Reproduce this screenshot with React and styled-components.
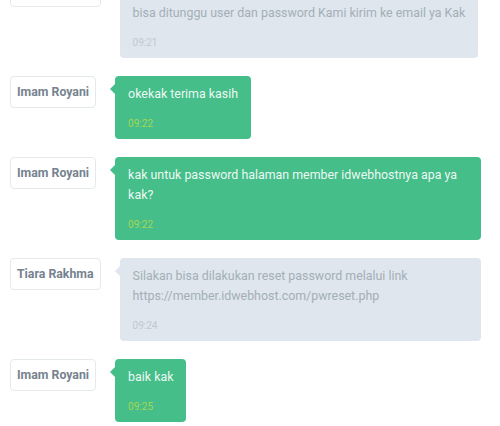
import React from "react";
import styled, { createGlobalStyle } from "styled-components";

const Global = createGlobalStyle`
  html, body { margin: 0; padding: 0; background: #ffffff; }
  body { font-family: Roboto, "Noto Sans", "Liberation Sans", sans-serif; overflow: hidden; }
`;

const Chat = styled.div`
  width: 500px;
  height: 426px;
  overflow: hidden;
  box-sizing: border-box;
`;

const List = styled.div`
  display: flex;
  flex-direction: column;
  gap: 18px;
  padding: 0 19px 0 10px;
  margin-top: -25px;
`;

const Row = styled.div`
  display: flex;
  align-items: flex-start;
`;

const NameTag = styled.div`
  flex: none;
  box-sizing: border-box;
  display: flex;
  align-items: center;
  height: 32px;
  padding: 0 6px;
  border: 1px solid #e4eaec;
  border-radius: 4px;
  font-size: 12.3px;
  font-weight: 700;
  line-height: 20px;
  color: #76838f;
  white-space: nowrap;
`;

const Bubble = styled.div`
  position: relative;
  flex: 0 1 auto;
  min-width: 0;
  margin-left: 19px;
  padding: 8px 13px 8px;
  border-radius: 4px;
  background: ${(p) => (p.$me ? "#46be8a" : "#dfe6ed")};
  color: ${(p) => (p.$me ? "rgba(255,255,255,0.92)" : "#a3afb7")};

  &::before {
    content: "";
    position: absolute;
    left: -5px;
    top: 8px;
    border-style: solid;
    border-width: 5px 5px 5px 0;
    border-color: transparent ${(p) => (p.$me ? "#46be8a" : "#dfe6ed")} transparent transparent;
  }
`;

const Text = styled.p`
  margin: 0;
  font-size: 12.4px;
  line-height: 20px;
`;

const Time = styled.time`
  display: block;
  margin-top: 12px;
  font-size: 10px;
  line-height: 15px;
  color: ${(p) => (p.$me ? "#a5d652" : "#bfc9d1")};
`;

const messages = [
  {
    name: "Tiara Rakhma",
    me: false,
    text: ["Baik Kak, akses halaman member sudah kami reset, mohon", "bisa ditunggu user dan password Kami kirim ke email ya Kak"],
    time: "09:21",
  },
  { name: "Imam Royani", me: true, text: ["okekak terima kasih"], time: "09:22" },
  {
    name: "Imam Royani",
    me: true,
    text: ["kak untuk password halaman member idwebhostnya apa ya kak?"],
    time: "09:22",
  },
  {
    name: "Tiara Rakhma",
    me: false,
    text: ["Silakan bisa dilakukan reset password melalui link https://member.idwebhost.com/pwreset.php"],
    time: "09:24",
  },
  { name: "Imam Royani", me: true, text: ["baik kak"], time: "09:25" },
];

export default function App() {
  return (
    <>
      <Global />
      <Chat>
        <List>
          {messages.map((m, i) => (
            <Row key={i}>
              <NameTag>{m.name}</NameTag>
              <Bubble $me={m.me}>
                <Text>
                  {m.text.map((line, j) => (
                    <React.Fragment key={j}>
                      {j > 0 && <br />}
                      {line}
                    </React.Fragment>
                  ))}
                </Text>
                <Time $me={m.me}>{m.time}</Time>
              </Bubble>
            </Row>
          ))}
        </List>
      </Chat>
    </>
  );
}
